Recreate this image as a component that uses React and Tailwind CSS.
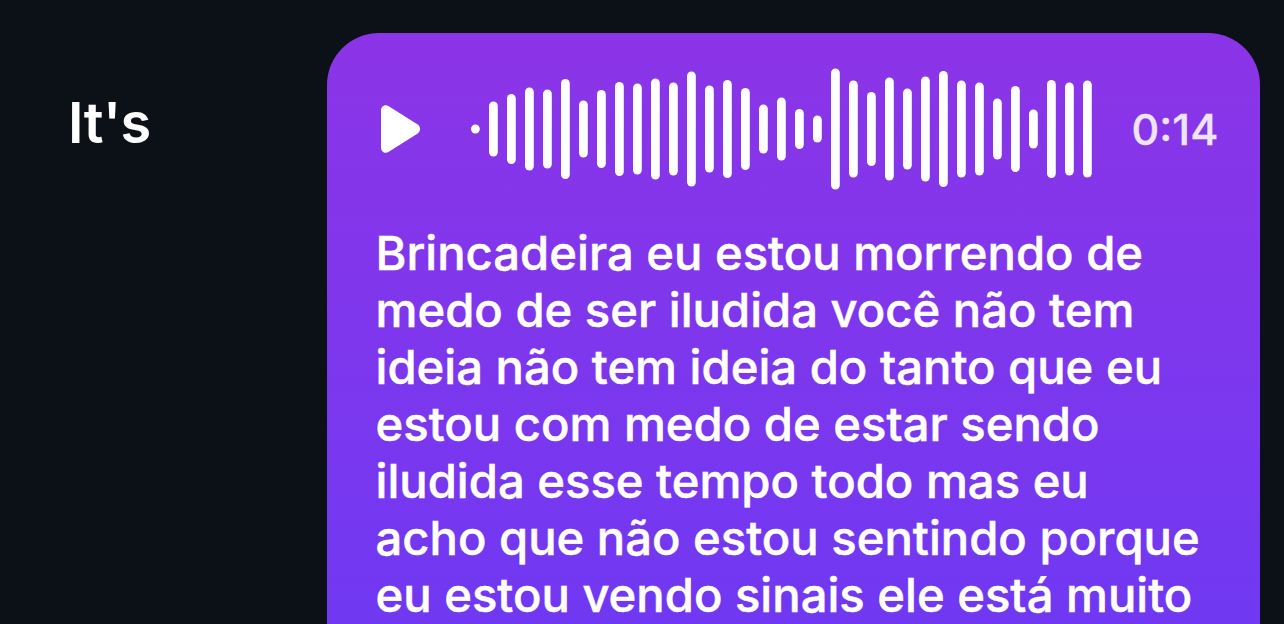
const BARS = [9,55,70,83,79,100,57,78,94,91,101,93,115,87,98,82,49,63,40,27,121,97,74,103,81,105,116,97,93,61,86,39,98,93,97];

const LINES = [
  "Brincadeira eu estou morrendo de",
  "medo de ser iludida você não tem",
  "ideia não tem ideia do tanto que eu",
  "estou com medo de estar sendo",
  "iludida esse tempo todo mas eu",
  "acho que não estou sentindo porque",
  "eu estou vendo sinais ele está muito",
];

export default function App() {
  return (
    <div className="flex h-[624px] w-[1284px] overflow-hidden bg-[#0b1117] pt-[33px] pl-[68px] font-['Inter','Liberation_Sans',sans-serif] text-white">
      <div className="w-[259px] shrink-0 pt-[55px] text-[56px] leading-[70px] font-semibold tracking-[-0.5px]">It's</div>
      <div className="w-[933px] shrink-0 overflow-hidden rounded-t-[52px] bg-gradient-to-b from-[#8c34e7] to-[#7038f2] pt-[35px] pl-[48.5px]">
        <div className="flex h-[122px] items-center">
          <svg width="44" height="52" viewBox="0 0 44 52" className="ml-[4px] shrink-0" fill="white">
            <path d="M1 7.5C1 3.2 5 .9 8.4 3L37.7 21.6C40.9 23.6 40.9 28.4 37.7 30.4L8.4 49C5 51.1 1 48.8 1 44.5Z" />
          </svg>
          <svg width="624" height="124" viewBox="0 0 624 124" className="ml-[46.5px] shrink-0" fill="white">
            {BARS.map((h, i) => (
              <rect key={i} x={i * 18 + 1} y={62 - h / 2} width="8.8" height={h} rx="4.4" />
            ))}
          </svg>
          <span className="ml-[37.5px] text-[43px] leading-none font-medium text-[#efe5fb] [-webkit-text-stroke:0.3px]">0:14</span>
        </div>
        <div className="mt-[34px] text-[47.2px] leading-[57px] font-medium whitespace-nowrap [-webkit-text-stroke:0.5px]">
          {LINES.map((l) => (
            <div key={l}>{l}</div>
          ))}
        </div>
      </div>
    </div>
  );
}
